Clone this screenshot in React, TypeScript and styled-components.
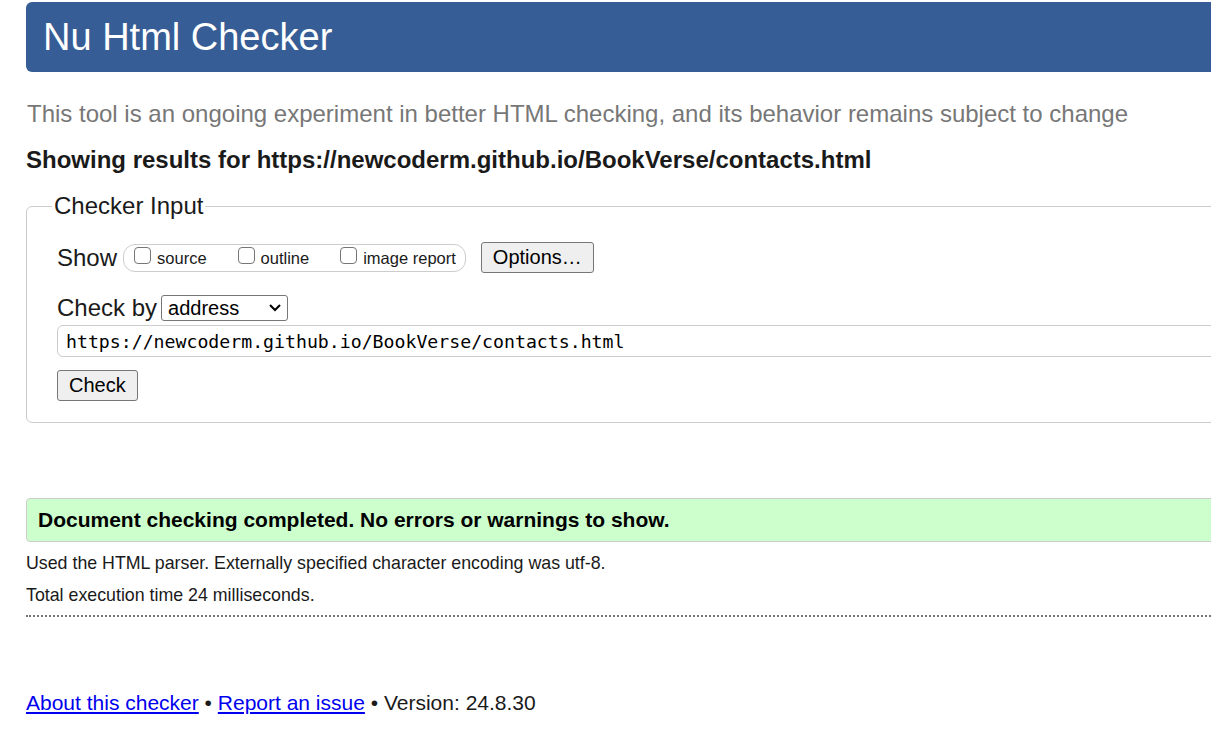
import React from "react";
import styled, { createGlobalStyle } from "styled-components";

const Global = createGlobalStyle`
  html, body { margin: 0; padding: 0; background: #fff; overflow: hidden; }
  body { font-family: "Liberation Sans", Arial, sans-serif; color: #000; }
`;

const Page = styled.div`
  width: 1300px;
  padding: 2px 0 0 26px;
  display: flex;
  flex-direction: column;
`;

const Header = styled.h1`
  margin: 0;
  height: 70px;
  background: #365d95;
  border-radius: 6px;
  color: #fff;
  font-weight: normal;
  font-size: 38px;
  padding-left: 17px;
  display: flex;
  align-items: center;
  box-sizing: border-box;
`;

const Intro = styled.p`
  margin: 28px 0 0 1px;
  color: #777;
  font-size: 24px;
  line-height: 28px;
`;

const Results = styled.p`
  margin: 18px 0 0 0;
  font-weight: bold;
  font-size: 24px;
  line-height: 28px;
  color: #1a1a1a;
`;

const Fieldset = styled.fieldset`
  margin: 18px 0 0 0;
  border: 1px solid #ccc;
  border-radius: 6px;
  padding: 0 0 21px 30px;
  display: flex;
  flex-direction: column;
  align-items: flex-start;
`;

const Legend = styled.legend`
  font-size: 24px;
  padding: 0 2px;
  margin-left: -5px;
  color: #1a1a1a;
`;

const Row = styled.div<{ $mt: number }>`
  display: flex;
  align-items: center;
  gap: 4px;
  margin-top: ${(p) => p.$mt}px;
`;

const Label = styled.span`
  font-size: 24px;
  color: #1a1a1a;
`;

const Pill = styled.div`
  display: flex;
  align-items: center;
  height: 28px;
  box-sizing: border-box;
  border: 1px solid #ccc;
  border-radius: 12px;
  padding: 0 9px 0 10px;
  gap: 31px;
  margin-left: 2px;
`;

const Opt = styled.label`
  display: flex;
  align-items: center;
  gap: 6px;
  font-size: 16.5px;
  color: #1a1a1a;
  padding-top: 2px;
`;

const Box = styled.span`
  width: 17px;
  height: 17px;
  box-sizing: border-box;
  border: 1px solid #767676;
  border-radius: 4px;
  margin-top: -6px;
  background: #fff;
`;

const Button = styled.button<{ $h: number; $ml?: number }>`
  font-family: "Liberation Sans", Arial, sans-serif;
  font-size: 20px;
  color: #000;
  background: #efefef;
  border: 1px solid #767676;
  border-radius: 3px;
  padding: 0 11px;
  height: ${(p) => p.$h}px;
  margin-left: ${(p) => p.$ml ?? 0}px;
`;

const Select = styled.div`
  display: flex;
  align-items: center;
  justify-content: space-between;
  width: 127px;
  height: 26px;
  box-sizing: border-box;
  border: 1px solid #767676;
  border-radius: 3px;
  padding: 0 5px 0 6px;
  font-size: 20px;
  color: #000;
`;

const UrlInput = styled.div`
  width: 1240px;
  height: 32px;
  box-sizing: border-box;
  border: 1px solid #ccc;
  border-radius: 6px;
  display: flex;
  align-items: center;
  padding-left: 8px;
  font-family: "DejaVu Sans Mono", "Liberation Mono", monospace;
  font-size: 18.2px;
  color: #000;
`;

const Success = styled.div`
  margin-top: 75px;
  height: 44px;
  box-sizing: border-box;
  background: #ccffcc;
  border: 1px solid #ccc;
  border-radius: 4px;
  padding-left: 11px;
  display: flex;
  align-items: center;
  font-weight: bold;
  font-size: 21px;
  color: #000;
`;

const Info = styled.p<{ $mt: number }>`
  margin: ${(p) => p.$mt}px 0 0 0;
  font-size: 17.8px;
  line-height: 20px;
  color: #1a1a1a;
`;

const Dotted = styled.hr`
  margin: 10px 0 0 0;
  border: 0;
  border-top: 2px dotted #777;
  height: 0;
`;

const Footer = styled.p`
  margin: 74px 0 0 0;
  font-size: 21px;
  color: #1a1a1a;
  a { color: #0000ee; }
`;

export default function App() {
  return (
    <>
      <Global />
      <Page>
        <Header>Nu Html Checker</Header>
        <Intro>
          This tool is an ongoing experiment in better HTML checking, and its behavior remains subject to change
        </Intro>
        <Results>Showing results for https://newcoderm.github.io/BookVerse/contacts.html</Results>
        <Fieldset>
          <Legend>Checker Input</Legend>
          <Row $mt={22}>
            <Label>Show</Label>
            <Pill>
              <Opt><Box />source</Opt>
              <Opt><Box />outline</Opt>
              <Opt><Box />image report</Opt>
            </Pill>
            <Button $h={31} $ml={11}>Options…</Button>
          </Row>
          <Row $mt={21}>
            <Label>Check by</Label>
            <Select>
              <span>address</span>
              <svg width="14" height="10" viewBox="0 0 14 10">
                <path d="M2 2 L7 7 L12 2" fill="none" stroke="#000" strokeWidth="2" />
              </svg>
            </Select>
          </Row>
          <Row $mt={3}>
            <UrlInput>https://newcoderm.github.io/BookVerse/contacts.html</UrlInput>
          </Row>
          <Row $mt={13}>
            <Button $h={31}>Check</Button>
          </Row>
        </Fieldset>
        <Success>Document checking completed. No errors or warnings to show.</Success>
        <Info $mt={11}>Used the HTML parser. Externally specified character encoding was utf-8.</Info>
        <Info $mt={12}>Total execution time 24 milliseconds.</Info>
        <Dotted />
        <Footer>
          <a href="#">About this checker</a> • <a href="#">Report an issue</a> • Version: 24.8.30
        </Footer>
      </Page>
    </>
  );
}
